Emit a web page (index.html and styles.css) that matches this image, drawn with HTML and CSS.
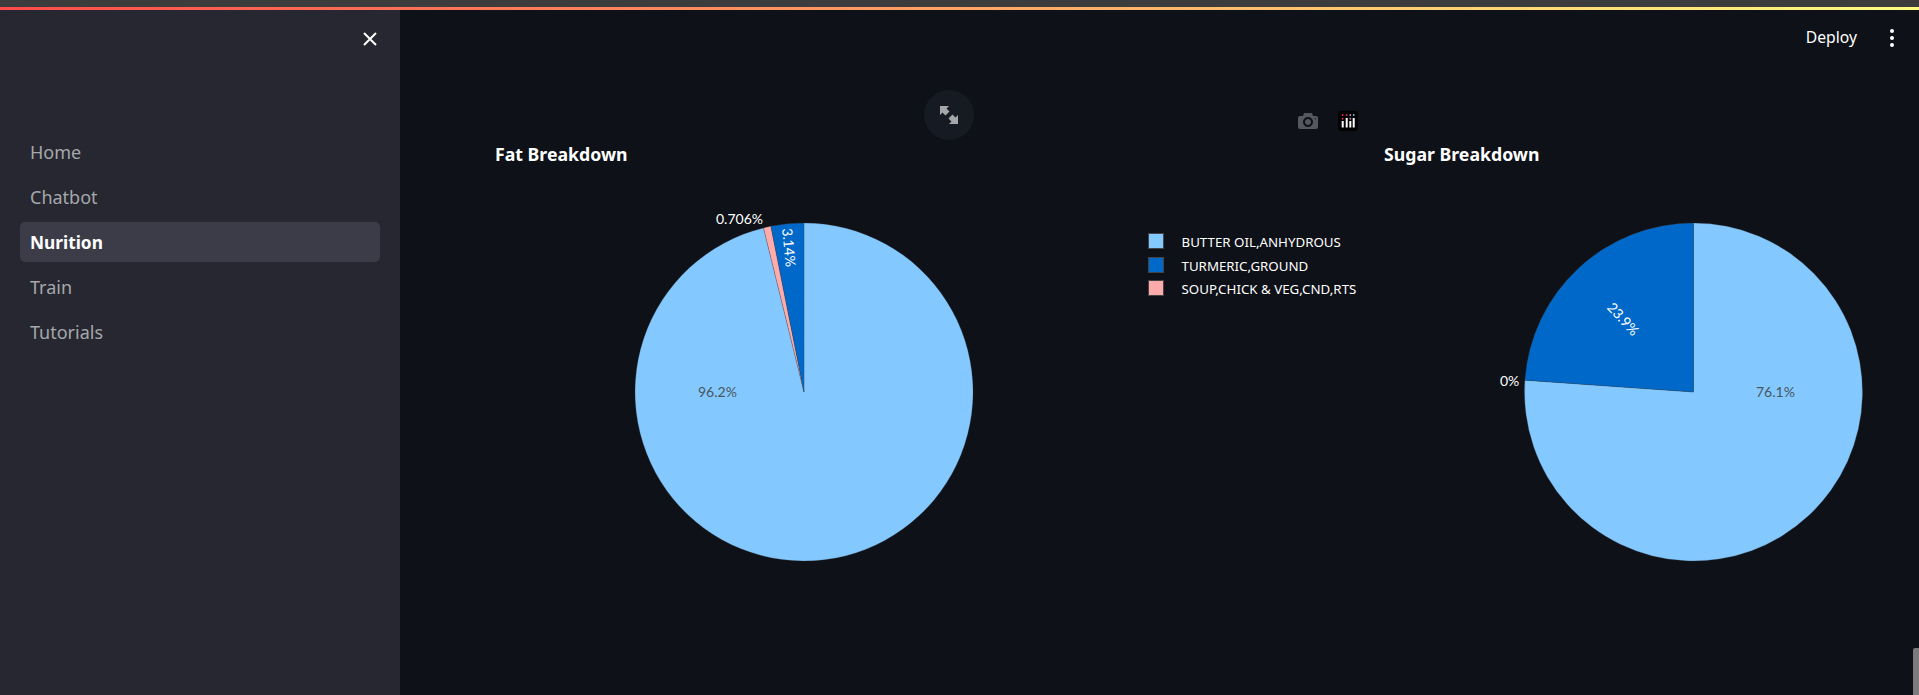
FILE: index.html
```html
<!DOCTYPE html>
<html lang="en">
  <head>
    <meta charset="UTF-8" />
    <meta name="viewport" content="width=device-width, initial-scale=1.0" />
    <title>Nurition</title>
    <link rel="stylesheet" href="styles.css">
  </head>
  <body>
    <div class="browser-strip"></div>
    <div class="decoration"></div>
    <div class="app">
      <aside class="sidebar">
        <div class="sidebar-top">
          <button class="close-btn" aria-label="Close sidebar">
            <svg width="14" height="14" viewBox="0 0 14 14"><path d="M1 1l12 12M13 1L1 13" stroke="#fff" stroke-width="2" fill="none"/></svg>
          </button>
        </div>
        <nav class="nav">
          <a class="nav-link">Home</a>
          <a class="nav-link">Chatbot</a>
          <a class="nav-link active">Nurition</a>
          <a class="nav-link">Train</a>
          <a class="nav-link">Tutorials</a>
        </nav>
      </aside>

      <main class="main">
        <header class="toolbar">
          <span class="deploy">Deploy</span>
          <span class="kebab"><i></i><i></i><i></i></span>
        </header>

        <div class="charts">
          <div class="chart chart-fat">
            <button class="expand-btn" aria-label="Fullscreen">
              <svg width="18" height="18" viewBox="0 0 18 18" fill="#a6a7aa">
                <polygon points="0,0 9,0 6.5,2.5 9.5,5.5 5.5,9.5 2.5,6.5 0,9"/>
                <polygon points="18,18 9,18 11.5,15.5 8.5,12.5 12.5,8.5 15.5,11.5 18,9"/>
              </svg>
            </button>
            <div class="modebar">
              <svg class="mode-camera" width="20" height="20" viewBox="0 0 1000 1000">
                <path transform="matrix(1 0 0 -1 0 850)" d="m500 450c-83 0-150-67-150-150 0-83 67-150 150-150 83 0 150 67 150 150 0 83-67 150-150 150z m400 150h-120c-16 0-34 13-39 29l-31 93c-6 15-23 28-40 28h-340c-16 0-34-13-39-28l-31-94c-6-15-23-28-40-28h-120c-55 0-100-45-100-100v-450c0-55 45-100 100-100h800c55 0 100 45 100 100v450c0 55-45 100-100 100z m-400-550c-138 0-250 112-250 250 0 138 112 250 250 250 138 0 250-112 250-250 0-138-112-250-250-250z m365 380c-19 0-35 16-35 35 0 19 16 35 35 35 19 0 35-16 35-35 0-19-16-35-35-35z"/>
              </svg>
              <svg width="20" height="20" viewBox="0 0 20 20">
                <rect width="20" height="20" rx="3" fill="#000"/>
                <g fill="#fff">
                  <rect x="3.7" y="10" width="2" height="6.5"/>
                  <rect x="7.7" y="7" width="2" height="9.5"/>
                  <rect x="11.3" y="10" width="2" height="6.5"/>
                  <rect x="14.7" y="7" width="2" height="9.5"/>
                </g>
                <circle cx="4.7" cy="4" r="0.9" fill="#e8236f"/>
                <circle cx="8.7" cy="4" r="0.9" fill="#e8236f"/>
                <circle cx="12.3" cy="4" r="0.9" fill="#b98ec0"/>
                <circle cx="15.7" cy="4" r="0.9" fill="#68d0e0"/>
                <circle cx="4.7" cy="7.7" r="0.9" fill="#e8236f"/>
                <circle cx="12.3" cy="7.7" r="0.9" fill="#b98ec0"/>
              </svg>
            </div>
            <svg class="plot" width="890" height="540" viewBox="480 80 890 540">
              <text class="plot-title" x="495" y="161">Fat Breakdown</text>
              <path class="slice" fill="#83c9ff" d="M804 392V223A169 169 0 1 1 763.55 227.92Z"/>
              <path class="slice" fill="#ffabab" d="M804 392L763.55 227.92A169 169 0 0 1 770.87 226.28Z"/>
              <path class="slice" fill="#0068c9" d="M804 392L770.87 226.28A169 169 0 0 1 804 223Z"/>
              <text class="pie-label dark" x="698" y="397">96.2%</text>
              <text class="pie-label" x="716" y="224">0.706%</text>
              <text class="pie-label" transform="translate(784 248) rotate(84.3)" text-anchor="middle">3.14%</text>
              <rect x="1148.5" y="233.5" width="15" height="15" fill="#83c9ff" stroke="#444" stroke-width="1"/>
              <rect x="1148.5" y="257.5" width="15" height="15" fill="#0068c9" stroke="#444" stroke-width="1"/>
              <rect x="1148.5" y="280.5" width="15" height="15" fill="#ffabab" stroke="#444" stroke-width="1"/>
              <text class="legend-label" x="1181.5" y="247">BUTTER OIL,ANHYDROUS</text>
              <text class="legend-label" x="1181.5" y="271">TURMERIC,GROUND</text>
              <text class="legend-label" x="1181.5" y="294">SOUP,CHICK &amp; VEG,CND,RTS</text>
            </svg>
          </div>

          <div class="chart chart-sugar">
            <svg class="plot" width="540" height="540" viewBox="1370 80 540 540">
              <text class="plot-title" x="1384" y="161">Sugar Breakdown</text>
              <path class="slice" fill="#83c9ff" d="M1693.5 392V223A169 169 0 1 1 1524.9 380.2Z"/>
              <path class="slice" fill="#0068c9" d="M1693.5 392L1524.9 380.2A169 169 0 0 1 1693.5 223Z"/>
              <text class="pie-label dark" x="1756" y="397">76.1%</text>
              <text class="pie-label" x="1500" y="386">0%</text>
              <text class="pie-label" transform="translate(1619.4 322.4) rotate(47)" text-anchor="middle">23.9%</text>
            </svg>
          </div>
        </div>

        <div class="scroll-thumb"></div>
      </main>
    </div>
  </body>
</html>
```

FILE: styles.css
```css
* {
  box-sizing: border-box;
}
html,
body {
  height: 100%;
}
body {
  margin: 0;
  display: flex;
  flex-direction: column;
  overflow: hidden;
  font-family: "Noto Sans", Arial, sans-serif;
  background-color: #0e1117;
  color: #fff;
}
.browser-strip {
  height: 7px;
  background: #3c3c3c;
}
.decoration {
  height: 3px;
  background: linear-gradient(90deg, #ff4b4b, #fffd80);
}
.app {
  flex: 1;
  display: flex;
  min-height: 0;
}
.sidebar {
  width: 400px;
  flex-shrink: 0;
  padding: 0 20px;
  background: #262730;
}
.sidebar-top {
  display: flex;
  justify-content: flex-end;
  height: 122px;
  padding-top: 22px;
}
.close-btn {
  width: 14px;
  height: 14px;
  margin-right: 3px;
  padding: 0;
  border: none;
  background: none;
  line-height: 0;
}
.nav {
  display: flex;
  flex-direction: column;
  gap: 5px;
}
.nav-link {
  height: 40px;
  padding: 0 10px;
  display: flex;
  align-items: center;
  border-radius: 5px;
  font-size: 18px;
  color: #a5a7ab;
}
.nav-link.active {
  background: #3c3c48;
  color: #fff;
  font-size: 17.3px;
  font-weight: 700;
}
.main {
  position: relative;
  flex: 1;
  min-width: 0;
}
.toolbar {
  height: 70px;
  padding: 17px 25px 0 0;
  display: flex;
  justify-content: flex-end;
  gap: 33px;
}
.deploy {
  font-size: 15.7px;
  line-height: 20px;
}
.kebab {
  display: flex;
  flex-direction: column;
  gap: 3px;
  padding-top: 2px;
}
.kebab i {
  width: 4px;
  height: 4px;
  border-radius: 50%;
  background: #fff;
}
.charts {
  display: flex;
  padding-left: 80px;
}
.chart {
  position: relative;
}
.plot {
  display: block;
}
.plot-title {
  font-size: 17.7px;
  font-weight: 700;
  fill: #fff;
}
.slice {
  stroke: #444;
  stroke-width: 0.25;
}
.pie-label {
  font-family: Lato, Arial, sans-serif;
  font-size: 14px;
  fill: #fff;
}
.pie-label.dark {
  fill: #4a5560;
}
.legend-label {
  font-size: 13.3px;
  fill: #fff;
}
.expand-btn {
  position: absolute;
  top: 10px;
  left: 444px;
  width: 50px;
  height: 50px;
  display: flex;
  align-items: center;
  justify-content: center;
  padding: 0;
  border: none;
  border-radius: 50%;
  background: #161a22;
}
.modebar {
  position: absolute;
  top: 31px;
  right: 12px;
  display: flex;
  gap: 20px;
  line-height: 0;
}
.mode-camera {
  fill: rgba(255, 255, 255, 0.3);
}
.scroll-thumb {
  position: absolute;
  right: 0;
  bottom: 0;
  width: 6px;
  height: 47px;
  border-radius: 2px 0 0 0;
  background: #7b7b7b;
}
```
